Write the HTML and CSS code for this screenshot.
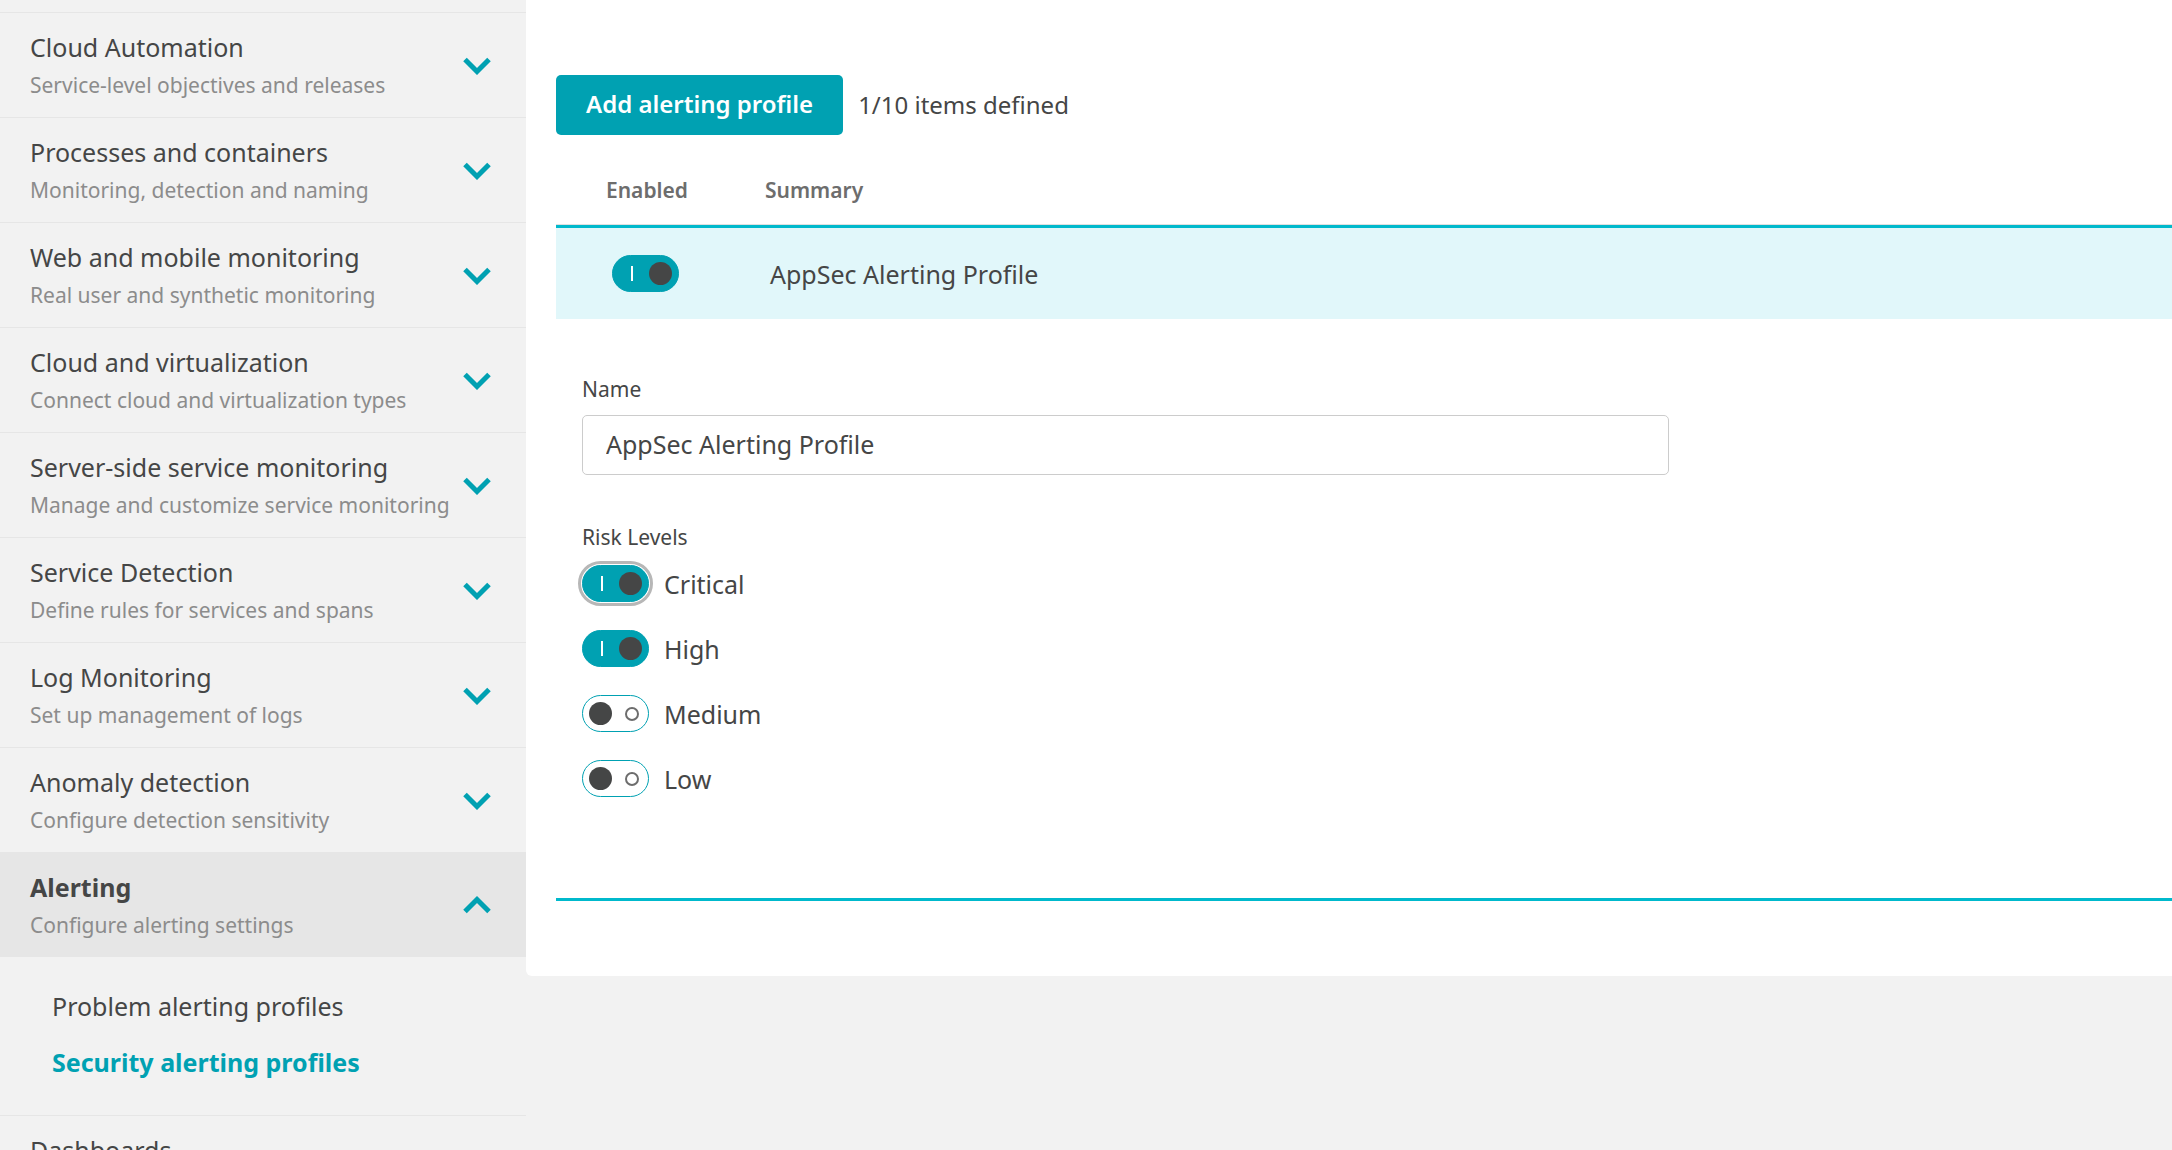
FILE: index.html
```
<!DOCTYPE html>
<html lang="en">
<head>
<meta charset="utf-8">
<meta name="viewport" content="width=device-width, initial-scale=1">
<title>Security alerting profiles</title>
<link rel="stylesheet" href="styles.css">
</head>
<body>
<svg class="icons" aria-hidden="true">
  <symbol id="chevron-down" viewBox="0 0 30 20"><path d="M3 4.500L15 16.500L27 4.500" fill="none" stroke="currentColor" stroke-width="5"/></symbol>
  <symbol id="chevron-up" viewBox="0 0 30 20"><path d="M3 16.500L15 4.500L27 16.500" fill="none" stroke="currentColor" stroke-width="5"/></symbol>
</svg>
<div class="app">
  <nav class="sidebar" aria-label="Settings">
    <button type="button" class="group"><span class="group-text"><span class="group-title">Cloud Automation</span><span class="group-note">Service-level objectives and releases</span></span><svg class="chevron" aria-hidden="true"><use href="#chevron-down"/></svg></button>
    <button type="button" class="group"><span class="group-text"><span class="group-title">Processes and containers</span><span class="group-note">Monitoring, detection and naming</span></span><svg class="chevron" aria-hidden="true"><use href="#chevron-down"/></svg></button>
    <button type="button" class="group"><span class="group-text"><span class="group-title">Web and mobile monitoring</span><span class="group-note">Real user and synthetic monitoring</span></span><svg class="chevron" aria-hidden="true"><use href="#chevron-down"/></svg></button>
    <button type="button" class="group"><span class="group-text"><span class="group-title">Cloud and virtualization</span><span class="group-note">Connect cloud and virtualization types</span></span><svg class="chevron" aria-hidden="true"><use href="#chevron-down"/></svg></button>
    <button type="button" class="group"><span class="group-text"><span class="group-title">Server-side service monitoring</span><span class="group-note">Manage and customize service monitoring</span></span><svg class="chevron" aria-hidden="true"><use href="#chevron-down"/></svg></button>
    <button type="button" class="group"><span class="group-text"><span class="group-title">Service Detection</span><span class="group-note">Define rules for services and spans</span></span><svg class="chevron" aria-hidden="true"><use href="#chevron-down"/></svg></button>
    <button type="button" class="group"><span class="group-text"><span class="group-title">Log Monitoring</span><span class="group-note">Set up management of logs</span></span><svg class="chevron" aria-hidden="true"><use href="#chevron-down"/></svg></button>
    <button type="button" class="group"><span class="group-text"><span class="group-title">Anomaly detection</span><span class="group-note">Configure detection sensitivity</span></span><svg class="chevron" aria-hidden="true"><use href="#chevron-down"/></svg></button>
    <button type="button" class="group group-open" aria-expanded="true"><span class="group-text"><span class="group-title">Alerting</span><span class="group-note">Configure alerting settings</span></span><svg class="chevron" aria-hidden="true"><use href="#chevron-up"/></svg></button>
    <div class="submenu">
      <a href="#problem">Problem alerting profiles</a>
      <a href="#security" class="current" aria-current="page">Security alerting profiles</a>
    </div>
    <button type="button" class="group"><span class="group-text"><span class="group-title">Dashboards</span></span></button>
  </nav>
  <main class="panel">
    <div class="toolbar">
      <button type="button" class="add">Add alerting profile</button>
      <span>1/10 items defined</span>
    </div>
    <table class="profiles">
      <thead>
        <tr><th class="col-enabled" scope="col">Enabled</th><th scope="col">Summary</th></tr>
      </thead>
      <tbody>
        <tr><td class="col-enabled"><input type="checkbox" class="toggle" aria-label="Enable AppSec Alerting Profile" checked></td><td>AppSec Alerting Profile</td></tr>
      </tbody>
    </table>
    <form class="details">
      <label class="caption" for="name">Name</label>
      <input class="name" id="name" type="text" value="AppSec Alerting Profile">
      <fieldset class="levels">
        <legend class="caption">Risk Levels</legend>
        <label class="level"><input type="checkbox" class="toggle toggle-focused" checked>Critical</label>
        <label class="level"><input type="checkbox" class="toggle" checked>High</label>
        <label class="level"><input type="checkbox" class="toggle">Medium</label>
        <label class="level"><input type="checkbox" class="toggle">Low</label>
      </fieldset>
    </form>
  </main>
</div>
</body>
</html>
```
FILE: styles.css
```
:root {
  --text: #454646;
  --muted: #8c8c8c;
  --teal: #00a1b2;
  --line: #00b9cc;
  --page: #f2f2f2;
}

*,
*::before,
*::after {
  box-sizing: border-box;
}

body {
  margin: 0;
  background: var(--page);
  color: var(--text);
  font: 25px/34px "Noto Sans", sans-serif;
}

button,
input {
  font: inherit;
  color: inherit;
}

.icons {
  display: none;
}

.app {
  display: grid;
  grid-template-columns: 526px 1fr;
  align-items: start;
  height: 100vh;
  overflow: hidden;
}

.sidebar {
  padding-top: 12px;
}

.group {
  display: flex;
  align-items: center;
  justify-content: space-between;
  width: 100%;
  padding: 17px 34px 18px 30px;
  border: 0;
  border-top: 1px solid #e6e6e6;
  background: none;
  text-align: left;
}

.group-text {
  display: flex;
  flex-direction: column;
  gap: 7px;
  white-space: nowrap;
}

.group-note {
  color: var(--muted);
  font-size: 21px;
  line-height: 28px;
}

.chevron {
  flex: none;
  width: 30px;
  height: 20px;
  color: var(--teal);
}

.group-open {
  background: #e6e6e6;
}

.group-open .group-title {
  font-weight: 700;
}

.submenu {
  display: flex;
  flex-direction: column;
  gap: 22px;
  padding: 32px 30px 36px 52px;
}

.submenu a {
  color: inherit;
  text-decoration: none;
}

.submenu .current {
  color: var(--teal);
  font-weight: 700;
}

.panel {
  padding: 75px 0 75px 30px;
  border-bottom-left-radius: 6px;
  background: #fff;
}

.toolbar {
  display: flex;
  align-items: center;
  gap: 15px;
  font-size: 24px;
}

.add {
  height: 60px;
  padding: 0 30px 2px;
  border: 0;
  border-radius: 5px;
  background: var(--teal);
  color: #fff;
  font-weight: 600;
}

.profiles {
  width: 100%;
  margin-top: 21px;
  border-spacing: 0;
  table-layout: fixed;
}

.profiles th {
  padding: 20px 0;
  border-bottom: 1px solid #e0e0e0;
  color: #6d6d6d;
  font-size: 21px;
  font-weight: 600;
  line-height: 28px;
  text-align: left;
}

.profiles td {
  padding: 27px 0 27px 5px;
  border-top: 3px solid var(--line);
  background: #e1f7fa;
}

.profiles .col-enabled {
  width: 209px;
  padding-left: 50px;
}

.profiles td.col-enabled {
  padding-left: 56px;
}

.toggle {
  appearance: none;
  flex: none;
  position: relative;
  display: block;
  width: 67px;
  height: 37px;
  margin: 0;
  border: 1px solid var(--teal);
  border-radius: 19px;
  background: #fff;
}

/* Knob */
.toggle::before {
  content: "";
  position: absolute;
  top: 6px;
  left: 6px;
  width: 23px;
  height: 23px;
  border-radius: 50%;
  background: var(--text);
}

/* On and off marks */
.toggle::after {
  content: "";
  position: absolute;
  top: 11px;
  right: 9px;
  width: 14px;
  height: 14px;
  border: 2px solid #6d6d6d;
  border-radius: 50%;
}

.toggle:checked {
  background: var(--teal);
}

.toggle:checked::before {
  left: 36px;
}

.toggle:checked::after {
  top: 10px;
  left: 18px;
  width: 2px;
  height: 15px;
  border: 0;
  border-radius: 0;
  background: #fff;
}

.toggle-focused {
  outline: 3px solid #b7b7b7;
  outline-offset: 1px;
}

.details {
  padding: 56px 26px 101px;
  border-bottom: 3px solid var(--line);
}

.caption {
  display: block;
  padding: 0;
  font-size: 21px;
  line-height: 28px;
}

.name {
  display: block;
  width: 100%;
  max-width: 1087px;
  height: 60px;
  margin: 12px 0 48px;
  padding: 0 23px 2px;
  border: 1px solid #ccc;
  border-radius: 5px;
  background: #fff;
}

.levels {
  display: flex;
  flex-direction: column;
  align-items: flex-start;
  gap: 28px;
  margin: 0;
  padding: 14px 0 0;
  border: 0;
}

.level {
  display: flex;
  align-items: center;
  gap: 15px;
}
```
